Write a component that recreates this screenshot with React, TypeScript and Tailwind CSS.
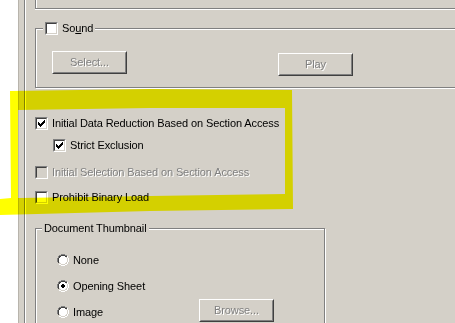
import React from "react";

const CHECK =
  "M9 3h1v1h-1z M8 4h2v1h-2z M3 5h1v1h-1z M7 5h3v1h-3z M3 6h2v1h-2z M6 6h3v1h-3z M3 7h5v1h-5z M4 8h3v1h-3z M5 9h1v1h-1z";

function CheckBox({ checked = false, disabled = false }: { checked?: boolean; disabled?: boolean }) {
  return (
    <div className="relative w-[13px] h-[13px] shrink-0 border border-t-[#808080] border-l-[#808080] border-b-white border-r-white">
      <div
        className={
          "w-[11px] h-[11px] border border-t-[#404040] border-l-[#404040] border-b-[#d4d0c8] border-r-[#d4d0c8] " +
          (disabled ? "bg-[#d4d0c8]" : "bg-white")
        }
      />
      {checked && (
        <svg className="absolute left-[-1px] top-[-1px]" width="13" height="13" viewBox="0 0 13 13" shapeRendering="crispEdges">
          <path d={CHECK} fill="#000" />
        </svg>
      )}
    </div>
  );
}

function Radio({ checked = false }: { checked?: boolean }) {
  return (
    <svg width="12" height="12" viewBox="0 0 12 12" className="shrink-0" shapeRendering="crispEdges">
      <path d="M4 0h4v1h-4z M2 1h2v1h-2z M8 1h2v1h-2z M1 2h1v2h-1z M0 4h1v4h-1z" fill="#808080" />
      <path d="M10 2h1v2h-1z M11 4h1v4h-1z M10 8h1v2h-1z M8 10h2v1h-2z M4 11h4v1h-4z M2 10h2v1h-2z" fill="#ffffff" />
      <path d="M4 1h4v1h-4z M2 2h2v1h-2z M8 2h2v1h-2z M2 3h1v1h-1z M1 4h1v4h-1z M1 8h1v1h-1z" fill="#404040" />
      <path d="M9 3h1v1h-1z M10 4h1v4h-1z M9 8h1v2h-1z M8 9h1v1h-1z M2 9h2v1h-2z M4 10h4v1h-4z" fill="#d4d0c8" />
      <path d="M4 2h4v1h-4z M3 3h6v1h-6z M2 4h8v4h-8z M3 8h6v1h-6z M4 9h4v1h-4z" fill="#ffffff" />
      {checked && <path d="M5 4h2v1h-2z M4 5h4v2h-4z M5 7h2v1h-2z" fill="#000" />}
    </svg>
  );
}

function Button({ label }: { label: string }) {
  return (
    <div className="shrink-0 h-[23px] w-[75px] border border-t-white border-l-white border-b-[#404040] border-r-[#404040]">
      <div className="h-full w-full border border-t-[#d4d0c8] border-l-[#d4d0c8] border-b-[#808080] border-r-[#808080] flex items-center justify-center text-[#808080] [text-shadow:1px_1px_0_#fff]">
        {label}
      </div>
    </div>
  );
}

function CheckRow({
  label,
  checked = false,
  disabled = false,
}: {
  label: string;
  checked?: boolean;
  disabled?: boolean;
}) {
  return (
    <div className="flex items-center gap-[4px] h-[13px]">
      <CheckBox checked={checked} disabled={disabled} />
      <span className={"whitespace-nowrap leading-[13px] " + (disabled ? "text-[#808080] [text-shadow:1px_1px_0_#fff]" : "text-black")}>
        {label}
      </span>
    </div>
  );
}

function RadioRow({ label, checked = false }: { label: string; checked?: boolean }) {
  return (
    <div className="flex items-center gap-[4px] h-[12px]">
      <Radio checked={checked} />
      <span className="whitespace-nowrap leading-[13px]">{label}</span>
    </div>
  );
}

export default function App() {
  return (
    <div className="relative w-[455px] h-[323px] overflow-hidden bg-[#d4d0c8] flex font-['Liberation_Sans',Arial,sans-serif] text-[11px] tracking-[-0.1px] text-black">
      <div className="w-[18px] shrink-0 bg-white" />
      <div className="w-px shrink-0 bg-[#b8b4ac]" />
      <div className="w-[5px] shrink-0" />
      <div className="w-px shrink-0 bg-[#808080]" />
      <div className="w-px shrink-0 bg-white" />
      <div className="flex-1 min-w-0 pl-[9px] flex flex-col">
        {/* previous group remnant */}
        <div className="shrink-0 h-[9px] w-[600px] border-l border-b border-[#808080] shadow-[inset_1px_0_0_#fff,0_1px_0_#fff]" />

        {/* Sound group */}
        <div className="shrink-0 relative mt-[19px] h-[60px] w-[600px] border border-[#808080] shadow-[inset_1px_1px_0_#fff,1px_1px_0_#fff]">
          <div className="absolute left-[7px] top-[-7px] px-[2px] bg-[#d4d0c8] flex items-center gap-[4px] h-[13px]">
            <CheckBox />
            <span className="leading-[13px]">
              So<span className="underline">u</span>nd
            </span>
          </div>
          <div className="flex items-start pl-[16px] pt-[22px] gap-[151px]">
            <Button label="Select..." />
            <div className="mt-[2px]">
              <Button label="Play" />
            </div>
          </div>
        </div>

        {/* checkboxes */}
        <div className="shrink-0 flex flex-col mt-[29px]">
          <CheckRow label="Initial Data Reduction Based on Section Access" checked />
          <div className="pl-[18px] mt-[9px]">
            <CheckRow label="Strict Exclusion" checked />
          </div>
          <div className="mt-[14px]">
            <CheckRow label="Initial Selection Based on Section Access" disabled />
          </div>
          <div className="mt-[12px]">
            <CheckRow label="Prohibit Binary Load" />
          </div>
        </div>

        {/* Document Thumbnail */}
        <div className="shrink-0 relative mt-[24px] h-[120px] w-[290px] border border-[#808080] shadow-[inset_1px_1px_0_#fff,1px_1px_0_#fff]">
          <div className="absolute left-[6px] top-[-7px] px-[2px] bg-[#d4d0c8] leading-[13px] h-[13px] whitespace-nowrap">
            Document Thumbnail
          </div>
          <div className="flex flex-col pl-[21px] pt-[25px]">
            <RadioRow label="None" />
            <div className="mt-[14px]">
              <RadioRow label="Opening Sheet" checked />
            </div>
            <div className="mt-[14px] flex items-start">
              <div className="w-[142px] shrink-0">
                <RadioRow label="Image" />
              </div>
              <div className="-mt-[7px]">
                <Button label="Browse..." />
              </div>
            </div>
          </div>
        </div>
      </div>

      {/* highlighter marking */}
      <svg
        className="absolute left-0 top-0 pointer-events-none mix-blend-multiply"
        width="455"
        height="323"
        viewBox="0 0 455 323"
      >
        <path
          fillRule="evenodd"
          fill="#ffff00"
          d="M10 91 L150 89 L292 90 L293 209 L150 211 L0 215 L0 199 L11 198 Z M18 110 L150 108 L285 108 L285 194 L150 196 L18 198 Z"
        />
      </svg>
    </div>
  );
}
